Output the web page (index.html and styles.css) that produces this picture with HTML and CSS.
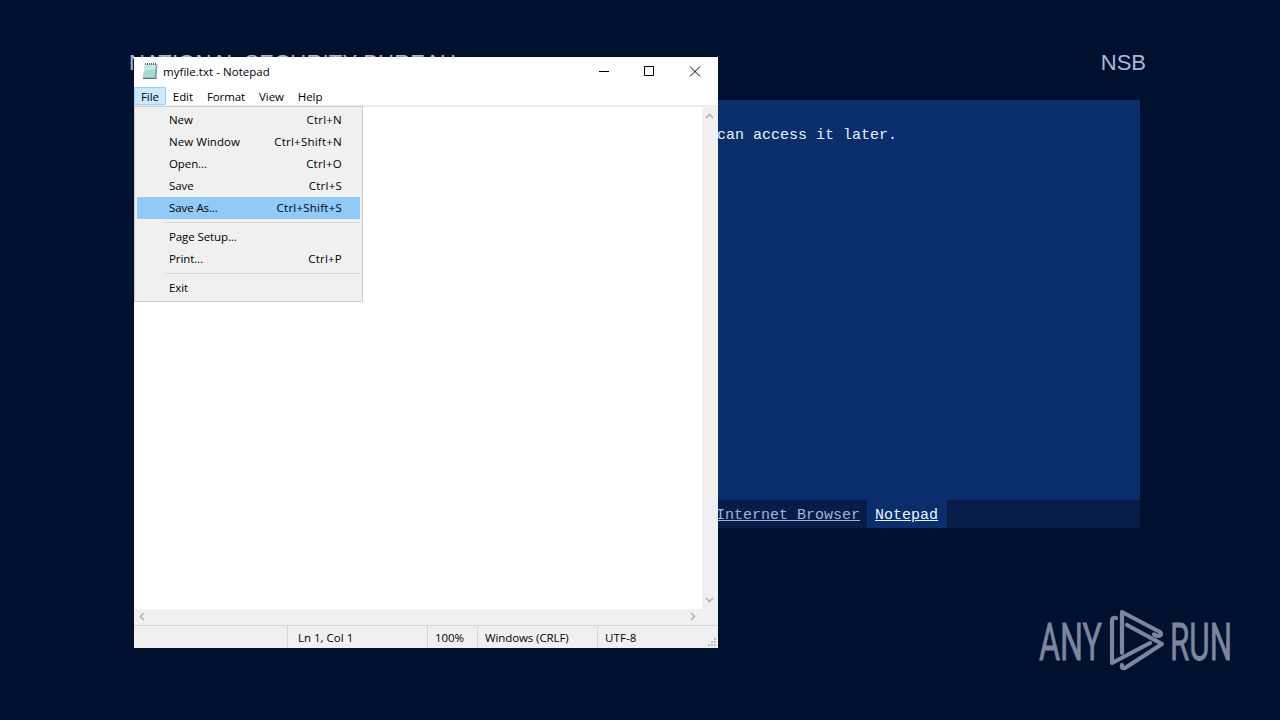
FILE: index.html
```
<!DOCTYPE html>
<html>
<head>
<meta charset="utf-8">
<title>NSB</title>
<link rel="stylesheet" href="styles.css">
</head>
<body>
<div class="header">
    <span class="agency">NATIONAL SECURITY BUREAU</span>
    <span>NSB</span>
</div>
<div class="panel">
    <p class="message">can access it later.</p>
    <div class="tabs">
        <a class="tab">Internet Browser</a>
        <a class="tab active">Notepad</a>
    </div>
</div>

<div class="window">
    <div class="titlebar">
        <svg class="app-icon" width="18" height="18" viewBox="0 0 18 18">
            <path d="M4 2.5H16.5L15.5 16.5H2Z" fill="#6fa9aa"/>
            <path d="M4 2.5H15L13.5 15.5H1.5Z" fill="#a5dad6"/>
            <path d="M4 3H14.5L14 7L3 9Z" fill="#c3e9e6"/>
            <path d="M2 16.5H15.5" stroke="#56777b"/>
            <path d="M4 2H16" stroke="#667" stroke-width="2" stroke-dasharray="1 1"/>
        </svg>
        <span class="title">myfile.txt - Notepad</span>
        <svg class="controls" width="138" height="30" viewBox="0 0 138 30">
            <path d="M19 14.5H29M64.5 9.5H73.5V18.5H64.5ZM110 9.5L120 19.5M120 9.5L110 19.5" fill="none" stroke="#000"/>
        </svg>
    </div>
    <div class="menubar">
        <span class="menu open">File</span>
        <span class="menu">Edit</span>
        <span class="menu">Format</span>
        <span class="menu">View</span>
        <span class="menu">Help</span>
    </div>
    <div class="editor">
        <div class="page"></div>
        <div class="scroll-y">
            <svg width="16" height="16"><path d="M4 11L7.5 7.5L11 11" fill="none" stroke="#b4b4b4" stroke-width="1.7"/></svg>
            <svg width="16" height="16"><path d="M4 5L7.5 8.5L11 5" fill="none" stroke="#b4b4b4" stroke-width="1.7"/></svg>
        </div>
    </div>
    <div class="scroll-x">
        <svg width="16" height="16"><path d="M10 4L6.5 7.5L10 11" fill="none" stroke="#b4b4b4" stroke-width="1.7"/></svg>
        <svg width="16" height="16"><path d="M6 4L9.5 7.5L6 11" fill="none" stroke="#b4b4b4" stroke-width="1.7"/></svg>
    </div>
    <div class="statusbar">
        <span class="cell"></span>
        <span class="cell position">Ln 1, Col 1</span>
        <span class="cell zoom">100%</span>
        <span class="cell ending">Windows (CRLF)</span>
        <span class="cell encoding">UTF-8</span>
        <svg class="grip" width="10" height="10"><path d="M7 1h2v2h-2zM4 4h2v2h-2zM7 4h2v2h-2zM1 7h2v2h-2zM4 7h2v2h-2zM7 7h2v2h-2z" fill="#bfbfbf"/></svg>
    </div>

    <div class="dropdown">
        <div class="item"><span>New</span><span class="key">Ctrl+N</span></div>
        <div class="item"><span class="wide">New Window</span><span class="key">Ctrl+Shift+N</span></div>
        <div class="item"><span>Open...</span><span class="key">Ctrl+O</span></div>
        <div class="item"><span>Save</span><span class="key">Ctrl+S</span></div>
        <div class="item selected"><span>Save As...</span><span class="key">Ctrl+Shift+S</span></div>
        <div class="line"></div>
        <div class="item"><span>Page Setup...</span></div>
        <div class="item"><span>Print...</span><span class="key">Ctrl+P</span></div>
        <div class="line"></div>
        <div class="item"><span>Exit</span></div>
    </div>
</div>

<svg class="watermark" width="220" height="80" viewBox="0 0 220 80">
    <g class="brand">
        <text x="9" y="59.5" textLength="63" lengthAdjust="spacingAndGlyphs">ANY</text>
        <text x="140" y="59.5" textLength="62" lengthAdjust="spacingAndGlyphs">RUN</text>
    </g>
    <g fill="none" stroke="#7c879f" stroke-width="4.2" stroke-linejoin="round" stroke-linecap="round">
        <path d="M86 18Q82 17 82 21V63L120 43"/>
        <path d="M92 53V12L130 32Q133 36 127 36L124 34.5"/>
        <path d="M97 25L132 44L95 68Q91 69 92 65"/>
    </g>
</svg>
</body>
</html>
```

FILE: styles.css
```
body {
    margin: 0;
    width: 1280px;
    height: 720px;
    overflow: hidden;
    position: relative;
    background: #001130;
    font-family: "Open Sans", sans-serif;
}
.header {
    display: flex;
    justify-content: space-between;
    height: 26px;
    padding: 50px 134px 24px 129px;
    color: #a9b8d8;
    font: 22px/26px "Liberation Sans", Arial, sans-serif;
}
.agency {
    letter-spacing: 0.2px;
}
.panel {
    display: flex;
    flex-direction: column;
    justify-content: space-between;
    width: 1000px;
    height: 428px;
    margin-left: 140px;
    background: #0a2d6b;
    font: 15px/18px "Liberation Mono", "Courier New", monospace;
}
.message {
    margin: 27px 0 0 577px;
    color: #e4f4ff;
}
.tabs {
    display: flex;
    height: 28px;
    padding-left: 568px;
    background: #071c46;
    line-height: 31px;
}
.tab {
    padding: 0 7px 0 8px;
    color: #9fb4dc;
    text-decoration: underline;
}
.tab.active {
    padding: 0 9px 0 8px;
    background: #0a2d6b;
    color: #e8f6ff;
}
.window {
    position: absolute;
    left: 134px;
    top: 57px;
    width: 584px;
    height: 591px;
    display: flex;
    flex-direction: column;
    background: #fff;
    color: #000;
    font-size: 11.5px;
    letter-spacing: -0.1px;
}
.titlebar {
    display: flex;
    align-items: center;
    height: 30px;
}
.app-icon {
    margin: 0 4px 2px 7px;
}
.title {
    padding-bottom: 2px;
    letter-spacing: 0.04px;
}
.controls {
    margin-left: auto;
}
.menubar {
    display: flex;
    height: 18px;
    line-height: 19px;
    border-bottom: 2px solid #eee;
}
.menu {
    padding: 0 7px;
    letter-spacing: -0.09px;
}
.menu.open {
    height: 18px;
    background: #cce8ff;
    box-shadow: inset 0 0 0 1px #99d1ff;
}
.editor {
    display: flex;
    flex: 1;
}
.page {
    flex: 1;
}
.scroll-y {
    display: flex;
    flex-direction: column;
    justify-content: space-between;
    width: 16px;
    background: #f0f0f0;
}
.scroll-x {
    display: flex;
    justify-content: space-between;
    height: 16px;
    padding-right: 17px;
    background: #f0f0f0;
}
.statusbar {
    display: flex;
    position: relative;
    height: 22px;
    border-top: 1px solid #d7d7d7;
    background: #f0f0f0;
    line-height: 23px;
}
.cell {
    box-sizing: border-box;
    width: 153px;
}
.cell + .cell {
    border-left: 1px solid #d7d7d7;
}
.cell.position {
    width: 140px;
    padding-left: 10px;
    letter-spacing: 0;
}
.cell.zoom {
    width: 50px;
    padding-left: 7px;
}
.cell.ending {
    width: 120px;
    padding-left: 7px;
}
.cell.encoding {
    width: 100px;
    padding-left: 7px;
    letter-spacing: 0.1px;
}
.grip {
    position: absolute;
    right: 1px;
    bottom: 1px;
}
.dropdown {
    position: absolute;
    left: 0;
    top: 49px;
    box-sizing: border-box;
    width: 229px;
    height: 196px;
    padding: 2px;
    border: 1px solid #ccc;
    background: #f0f0f0;
}
.item {
    display: flex;
    justify-content: space-between;
    height: 22px;
    padding: 0 18px 0 32px;
    line-height: 22px;
}
.item.selected {
    background: #91c9f7;
}
.wide {
    letter-spacing: 0.05px;
}
.key {
    letter-spacing: 0.23px;
}
.line {
    height: 1px;
    margin: 3px 0 3px 28px;
    background: #d7d7d7;
}
.watermark {
    position: absolute;
    left: 1030px;
    top: 600px;
    font-family: Roboto, sans-serif;
}
.brand {
    fill: #7c879f;
    stroke: #7c879f;
    stroke-width: 0.8px;
    font-size: 52px;
}
```
